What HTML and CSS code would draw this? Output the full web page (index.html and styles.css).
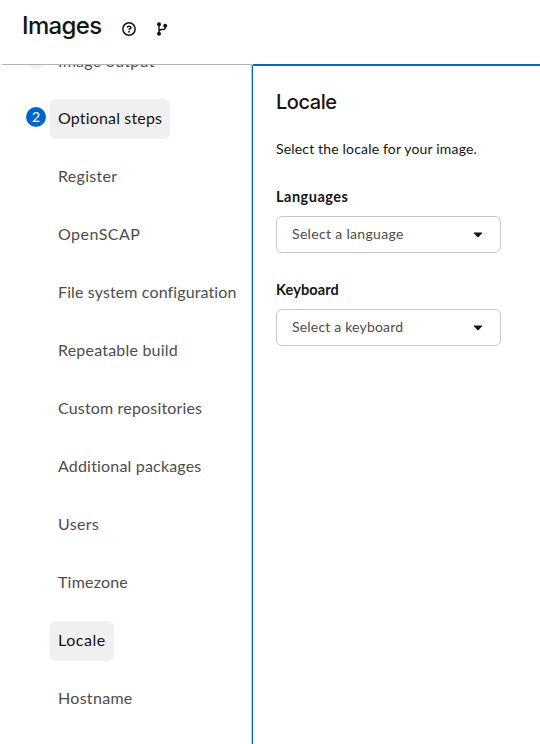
FILE: index.html
```html
<!DOCTYPE html>
<html lang="en">
<head>
<meta charset="utf-8">
<title>Images</title>
<link rel="stylesheet" href="styles.css">
</head>
<body>
<header class="header">
  <h1 class="title">Images</h1>
  <svg class="icon" width="14" height="14" viewBox="0 0 14 14" fill="none" stroke="#151515">
    <circle cx="7" cy="7" r="6.15" stroke-width="1.5"/>
    <path d="M5.2 5.6C5.3 4.7 6 4.2 7.1 4.2c1.1 0 1.8.5 1.8 1.350C8.9 6.6 7.1 6.7 7.1 8" stroke-width="1.6"/>
    <circle cx="7.1" cy="9.8" r=".95" fill="#151515" stroke="none"/>
  </svg>
  <svg class="icon branch" width="12" height="14" viewBox="0 0 12 14" fill="#151515">
    <path d="M3 2v10M9.200 4v1.500q0 2-2.200 2H5.500Q3 7.700 3 9.500" fill="none" stroke="#151515" stroke-width="1.400"/>
    <circle cx="3" cy="2.200" r="2"/><circle cx="9.200" cy="3.700" r="2"/><circle cx="3" cy="11.800" r="2"/>
  </svg>
</header>
<div class="wizard">
  <nav class="nav">
    <ul class="steps">
      <li class="step"><span class="num muted">1</span><a class="link w-output">Image output</a></li>
      <li class="step"><span class="num">2</span><a class="link current w-optional">Optional steps</a></li>
      <li class="step sub"><a class="link w-register">Register</a></li>
      <li class="step sub"><a class="link w-scap">OpenSCAP</a></li>
      <li class="step sub"><a class="link w-file">File system configuration</a></li>
      <li class="step sub"><a class="link w-build">Repeatable build</a></li>
      <li class="step sub"><a class="link w-repos">Custom repositories</a></li>
      <li class="step sub"><a class="link w-packages">Additional packages</a></li>
      <li class="step sub"><a class="link w-users">Users</a></li>
      <li class="step sub"><a class="link w-time">Timezone</a></li>
      <li class="step sub"><a class="link current w-locale">Locale</a></li>
      <li class="step sub"><a class="link w-host">Hostname</a></li>
    </ul>
  </nav>
  <main class="panel">
    <h2 class="heading">Locale</h2>
    <p class="intro">Select the locale for your image.</p>
    <div class="field">
      <div class="label w-languages">Languages</div>
      <div class="select"><span class="w-lang">Select a language</span><svg width="10" height="6" viewBox="0 0 10 6"><path d="M1.200.5h7.600q.7.200.2.800L5.600 5q-.6.500-1.200 0L1 1.300Q.500.700 1.200.5z" fill="#151515"/></svg></div>
    </div>
    <div class="field">
      <div class="label w-keyboard">Keyboard</div>
      <div class="select"><span class="w-key">Select a keyboard</span><svg width="10" height="6" viewBox="0 0 10 6"><path d="M1.200.5h7.600q.7.200.2.800L5.600 5q-.6.500-1.200 0L1 1.300Q.500.700 1.200.5z" fill="#151515"/></svg></div>
    </div>
  </main>
</div>
</body>
</html>
```
FILE: styles.css
```css
* { box-sizing: border-box; }
body { margin: 0; height: 744px; overflow: hidden; background: #fff; color: #151515; font-family: Lato, "Open Sans", sans-serif; }
h1, h2, p, ul { margin: 0; padding: 0; }
.header { height: 64px; display: flex; align-items: flex-start; padding-left: 22px; }
.title { width: 100px; font: 500 24px/31px Inter, sans-serif; padding-top: 10px; letter-spacing: -.65px; white-space: nowrap; }
.icon { margin-top: 22px; flex: none; }
.branch { margin-left: 20px; }
.wizard { display: flex; height: 680px; }
.nav { width: 250px; margin-left: 2px; border-top: 1px solid #b4b4b4; border-right: 1px solid #c7c7c7; overflow: hidden; flex: none; }
.steps { list-style: none; margin-top: -24px; padding-left: 24px; display: flex; flex-direction: column; gap: 18px; }
.step { display: flex; height: 40px; }
.sub { padding-left: 24px; }
.num { width: 20px; height: 20px; margin: 8px 4px 0 0; border-radius: 50%; background: #06c; color: #fff; font-size: 14px; line-height: 20px; text-align: center; }
.muted { background: #f0f0f0; color: #4d4d4d; }
.link { height: 40px; padding: 0 8px; border-radius: 6px; font-size: 16px; line-height: 37px; letter-spacing: .3px; color: #4d4d4d; white-space: nowrap; }
.current { background: #f0f0f0; color: #151515; }
.w-output { line-height: 39px; letter-spacing: .27px; }
.w-optional { width: 120px; letter-spacing: .16px; }
.w-scap { letter-spacing: .46px; }
.w-file { letter-spacing: .12px; }
.w-build { letter-spacing: .2px; }
.w-repos { letter-spacing: .17px; }
.w-packages { letter-spacing: .18px; }
.w-time { letter-spacing: .2px; }
.w-locale { width: 64px; letter-spacing: .55px; }
.panel { flex: 1; border-top: 2px solid #1060c4; border-left: 1px solid #06c; border-top-left-radius: 2px; padding: 22px 0 0 23px; white-space: nowrap; }
.heading { font: 500 20px/28px Inter, sans-serif; letter-spacing: -.45px; }
.intro { margin-top: 22px; font-size: 14px; line-height: 21px; letter-spacing: .17px; }
.field { margin-top: 26px; }
.field:first-of-type { margin-top: 27px; }
.label { height: 21px; font-size: 14.5px; line-height: 21px; font-weight: 700; }
.w-languages { letter-spacing: .5px; }
.w-keyboard { letter-spacing: .12px; }
.select { width: 225px; height: 37px; margin-top: 9px; border: 1px solid #c7c7c7; border-radius: 6px; display: flex; align-items: center; justify-content: space-between; padding: 0 17px 0 15px; font-size: 14px; line-height: 21px; color: #4d4d4d; }
.select span { padding-bottom: 2px; }
.w-lang { letter-spacing: .33px; }
.w-key { letter-spacing: .19px; }
```
